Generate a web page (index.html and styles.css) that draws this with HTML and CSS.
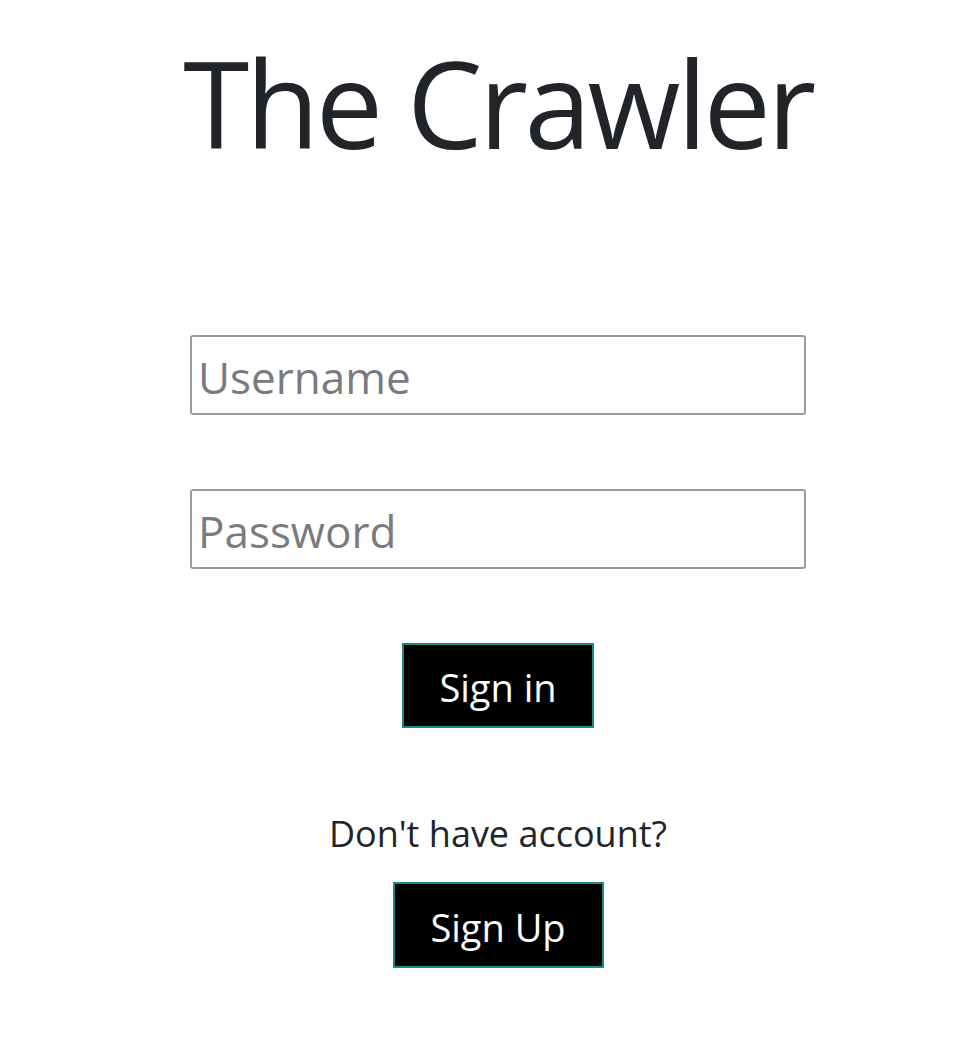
FILE: index.html
```html
<!DOCTYPE html>
<html>
<head>
<meta charset="utf-8">
<title>The Crawler</title>
<link rel="stylesheet" href="styles.css">
</head>
<body>
<main class="page">
  <h1 class="title">The Crawler</h1>
  <form class="form">
    <input class="field" type="text" placeholder="Username">
    <input class="field" type="password" placeholder="Password">
    <button class="btn btn-signin" type="button">Sign in</button>
  </form>
  <p class="note">Don't have account?</p>
  <button class="btn btn-signup" type="button">Sign Up</button>
</main>
</body>
</html>
```

FILE: styles.css
```css
* { box-sizing: border-box; }
html, body { margin: 0; padding: 0; background: #fff; }
body {
  font-family: "Open Sans", "Noto Sans", sans-serif;
  color: #212529;
}
.page {
  display: flex;
  flex-direction: column;
  align-items: center;
  padding-left: 16px;
  padding-top: 31px;
}
.title {
  margin: 0;
  font-size: 120px;
  font-weight: 400;
  letter-spacing: -3.6px;
  line-height: 144px;
  height: 144px;
}
.form {
  display: flex;
  flex-direction: column;
  align-items: center;
  gap: 74px;
  margin-top: 160px;
}
.field {
  width: 616px;
  height: 80px;
  border: 2px solid #9b9aa8;
  border-radius: 3px;
  padding: 4px 6px 0;
  font-family: "Open Sans", "Noto Sans", sans-serif;
  font-size: 44px;
  color: #212529;
  outline: none;
}
.field::placeholder { color: #7a7a80; }
.btn {
  background: #000;
  color: #fff;
  border: 2px solid #1a8a88;
  border-radius: 0;
  font-family: "Open Sans", "Noto Sans", sans-serif;
  font-size: 38px;
  padding: 3px 0 0;
  height: 85px;
  display: flex;
  align-items: center;
  justify-content: center;
}
.btn-signin { width: 192px; }
.btn-signup { width: 211px; height: 86px; }
.note {
  margin: 82px 0 24px;
  font-size: 36px;
  line-height: 48px;
}
```
